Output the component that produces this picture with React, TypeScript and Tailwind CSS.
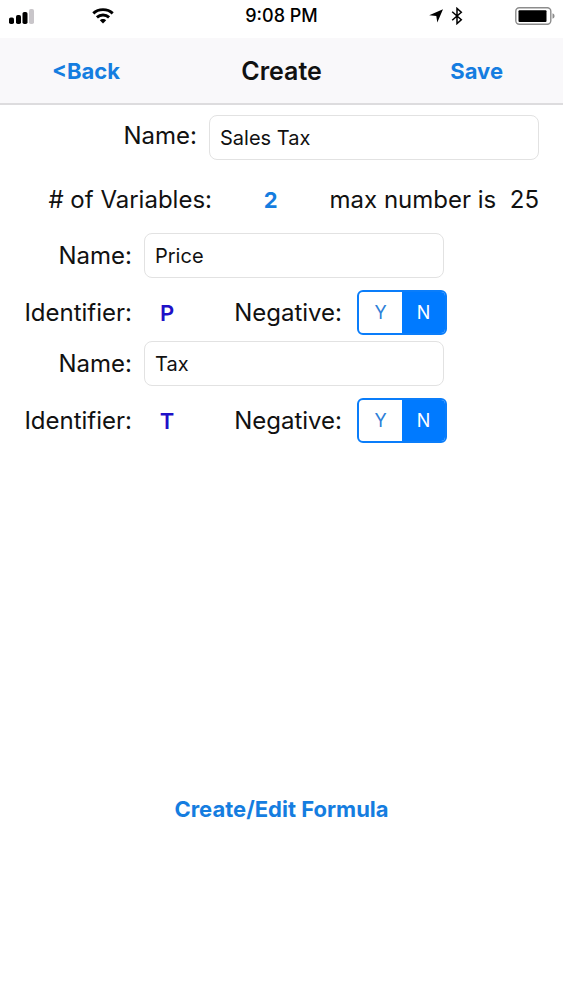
import React, { useState } from 'react';

interface Variable {
  id: number;
  name: string;
  identifier: string;
  negative: boolean;
}

const StatusBar: React.FC = () => (
  <div className="grid h-[38px] grid-cols-3 items-center bg-white pr-2 pb-1.5 pl-2 text-black">
    <div className="flex items-center">
      <svg width="26" height="17" viewBox="0 0 26 17" aria-label="Signal">
        <rect x="1" y="9.5" width="5" height="6.5" rx="1.8" />
        <rect x="8" y="7" width="5" height="9" rx="1.8" />
        <rect x="14.5" y="4" width="5" height="12" rx="1.8" />
        <rect x="21" y="1" width="5" height="15" rx="1.8" fill="#c9c6ca" />
      </svg>
      <svg className="ml-[58px]" width="22" height="16" viewBox="0 0 22 16" fill="none" stroke="#000" strokeWidth="2.9" aria-label="Wi-Fi">
        <path d="M1.3 5.4C6.5.4 15.5.4 20.7 5.4" />
        <path d="M4.9 9.4C8.4 6.1 13.6 6.1 17.1 9.4" />
        <path d="M11 15.4 7.8 12.2C9.4 10.6 12.6 10.6 14.2 12.2Z" fill="#000" stroke="none" />
      </svg>
    </div>
    <div className="text-center text-[18px] leading-6 font-medium">9:08 PM</div>
    <div className="flex items-center justify-end">
      <svg width="14" height="14" viewBox="0 0 14 14" aria-label="Location">
        <path d="M14 .3 8.3 13.5 7.3 7 .2 6.3Z" />
      </svg>
      <svg className="ml-2" width="12" height="18" viewBox="0 0 12 18" fill="none" stroke="#000" strokeWidth="1.5" aria-label="Bluetooth">
        <path d="M1.2 4.8 10.3 12.8 6 16.6V1.4L10.3 5.2 1.2 13.2" />
      </svg>
      <svg className="ml-[52px]" width="40" height="18" viewBox="0 0 40 18" aria-label="Battery">
        <rect x=".8" y=".8" width="35" height="16.4" rx="3.5" fill="none" stroke="#8c8c8c" strokeWidth="1.4" />
        <rect x="3.5" y="3.3" width="28" height="11.6" rx="1" />
        <path d="M37.5 6.2Q39.6 7 39.6 9T37.5 11.8Z" fill="#8c8c8c" />
      </svg>
    </div>
  </div>
);

const NavBar: React.FC = () => (
  <header className="grid h-[67px] grid-cols-3 items-center border-b-2 border-[#dddcde] bg-[#f9f8fa]">
    <button type="button" className="justify-self-start pl-[52px] text-[22px] leading-8 font-bold text-[#157de0]">
      &lt;Back
    </button>
    <h1 className="text-center text-[25px] leading-8 font-semibold">Create</h1>
    <button type="button" className="justify-self-end pr-[60px] text-[22px] leading-8 font-bold text-[#157de0]">
      Save
    </button>
  </header>
);

interface VariableFieldsProps {
  variable: Variable;
  onChange: (variable: Variable) => void;
}

const VariableFields: React.FC<VariableFieldsProps> = ({ variable, onChange }) => {
  const nameId = `name-${variable.id}`;
  const negativeId = `negative-${variable.id}`;

  return (
    <section>
      <div className="flex items-center gap-3 pr-[119px]">
        <label htmlFor={nameId} className="w-[132px] shrink-0 text-right">
          Name:
        </label>
        <input
          id={nameId}
          className="h-[45px] min-w-0 flex-1 rounded-lg border border-[#e2e2e2] bg-white px-2.5 text-[20px]"
          value={variable.name}
          onChange={(e) => onChange({ ...variable, name: e.target.value })}
        />
      </div>
      <div className="mt-3 flex items-center">
        <span className="w-[132px] shrink-0 text-right">Identifier:</span>
        <button type="button" aria-label="Identifier" className="w-[70px] text-[22px] font-semibold text-[#1f10c8]">
          {variable.identifier}
        </button>
        <span id={negativeId} className="w-[140px] text-right">Negative:</span>
        <div
          role="radiogroup"
          aria-labelledby={negativeId}
          className="relative ml-[15px] flex h-[45px] w-[90px] overflow-hidden rounded-md border-2 border-[#0a7dfa] text-[18px]"
        >
          <label className="flex flex-1 items-center justify-center text-[#2d80d8] has-checked:bg-[#007aff] has-checked:text-white">
            <input
              type="radio"
              name={negativeId}
              className="sr-only"
              checked={variable.negative}
              onChange={() => onChange({ ...variable, negative: true })}
            />
            Y
          </label>
          <label className="flex flex-1 items-center justify-center text-[#2d80d8] has-checked:bg-[#007aff] has-checked:text-white">
            <input
              type="radio"
              name={negativeId}
              className="sr-only"
              checked={!variable.negative}
              onChange={() => onChange({ ...variable, negative: false })}
            />
            N
          </label>
        </div>
      </div>
    </section>
  );
};

const App: React.FC = () => {
  const [formulaName, setFormulaName] = useState('Sales Tax');
  const [variables, setVariables] = useState<Variable[]>([
    { id: 1, name: 'Price', identifier: 'P', negative: false },
    { id: 2, name: 'Tax', identifier: 'T', negative: false },
  ]);

  const updateVariable = (updated: Variable) => {
    setVariables(variables.map(v => (v.id === updated.id ? updated : v)));
  };

  return (
    <div className="min-h-screen bg-white font-[Inter,sans-serif] text-[#111]">
      <StatusBar />
      <NavBar />

      <main className="pt-[10px] text-[24px] leading-8">
        <div className="flex items-center gap-3 pr-6">
          <label htmlFor="formula-name" className="w-[197px] shrink-0 pb-1 text-right">
            Name:
          </label>
          <input
            id="formula-name"
            className="h-[45px] min-w-0 flex-1 rounded-lg border border-[#e2e2e2] bg-white px-2.5 text-[20px]"
            value={formulaName}
            onChange={(e) => setFormulaName(e.target.value)}
          />
        </div>

        <div className="mt-6 flex items-center pr-6">
          <span className="w-[212px] shrink-0 text-right"># of Variables:</span>
          <button type="button" aria-label="Number of variables" className="flex-1 text-[22px] font-bold text-[#157de0]">
            {variables.length}
          </button>
          <span className="whitespace-pre">max number is  25</span>
        </div>

        <div className="mt-[17px] flex flex-col gap-[6px]">
          {variables.map(variable => (
            <VariableFields key={variable.id} variable={variable} onChange={updateVariable} />
          ))}
        </div>

        <div className="mt-[350px] text-center">
          <button type="button" className="text-[22px] leading-8 font-bold text-[#157de0]">
            Create/Edit Formula
          </button>
        </div>
      </main>
    </div>
  );
};

export default App;
